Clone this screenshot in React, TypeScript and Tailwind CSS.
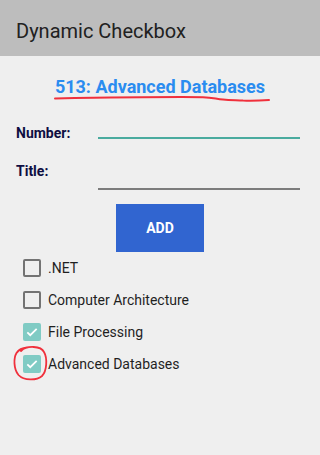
import { useState } from "react";

const courses = [
  { name: ".NET", checked: false },
  { name: "Computer Architecture", checked: false },
  { name: "File Processing", checked: true },
  { name: "Advanced Databases", checked: true },
];

function Box({ checked }: { checked: boolean }) {
  if (checked) {
    return (
      <span className="flex h-[18px] w-[18px] items-center justify-center rounded-[2px] bg-[#80cbc4]">
        <svg width="14" height="14" viewBox="0 0 24 24" fill="none" stroke="white" strokeWidth="3">
          <path d="M4 12.5l5 5L20 6.5" />
        </svg>
      </span>
    );
  }
  return <span className="h-[18px] w-[18px] rounded-[2px] border-2 border-[#737373]" />;
}

export default function App() {
  const [items] = useState(courses);
  return (
    <div className="h-[455px] w-[320px] bg-[#efefef] font-['Roboto',sans-serif]">
      <div className="flex h-14 items-center bg-[#bdbdbd] pl-4 pt-[6px] text-[20px] text-[#212121]">
        Dynamic Checkbox
      </div>

      <div className="relative mt-[19px] flex justify-center">
        <h1 className="text-[18px] font-bold leading-6 text-[#2a8cf0]">513: Advanced Databases</h1>
        {/* red underline scribble */}
        <svg className="absolute left-[53px] top-[20px]" width="220" height="10" viewBox="0 0 220 10" fill="none">
          <path
            d="M2 3.5 C60 2.5 130 2 150 2.2 C160 2.4 163 4 170 4.5 C178 5.5 185 5 190 5.6 C200 5.8 210 5.2 216 5"
            stroke="#f0303c"
            strokeWidth="2"
            strokeLinecap="round"
          />
        </svg>
      </div>

      <div className="mt-[24px] flex h-5 items-center pl-4 pr-5">
        <span className="w-[82px] text-[14px] font-bold leading-5 text-[#0e0e42]">Number:</span>
        <div className="mt-[10px] h-[2px] flex-1 bg-[#4aab9f]" />
      </div>

      <div className="mt-[18px] flex h-5 items-center pl-4">
        <span className="text-[14px] font-bold leading-5 text-[#0e0e42]">Title:</span>
      </div>
      <div className="ml-[98px] mr-5 mt-[7px] h-[1.5px] bg-[#7c7c7c]" />

      <div className="mt-[14.5px] flex justify-center">
        <button className="h-12 w-[88px] bg-[#3165d0] text-[14px] font-bold text-white">ADD</button>
      </div>

      <div className="mt-[7px] flex flex-col gap-[14px] pl-[23px]">
        {items.map((c, i) => (
          <label key={c.name} className="relative flex h-[18px] items-center gap-[7px] text-[14px] text-[#1f1f1f]">
            <Box checked={c.checked} />
            <span>{c.name}</span>
            {i === items.length - 1 && (
              <svg className="absolute left-[-11px] top-[-11px]" width="38" height="40" viewBox="0 0 38 40" fill="none">
                <path
                  d="M9 7 C15 1 29 2 32 8 C35.5 14 35 27 30 32 C25 36.5 12 37 6.5 31 C1.5 25 1.5 14 4.5 9 C6.5 6 10 4 15 3.5"
                  stroke="#f0303c"
                  strokeWidth="1.8"
                  strokeLinecap="round"
                />
              </svg>
            )}
          </label>
        ))}
      </div>
    </div>
  );
}
